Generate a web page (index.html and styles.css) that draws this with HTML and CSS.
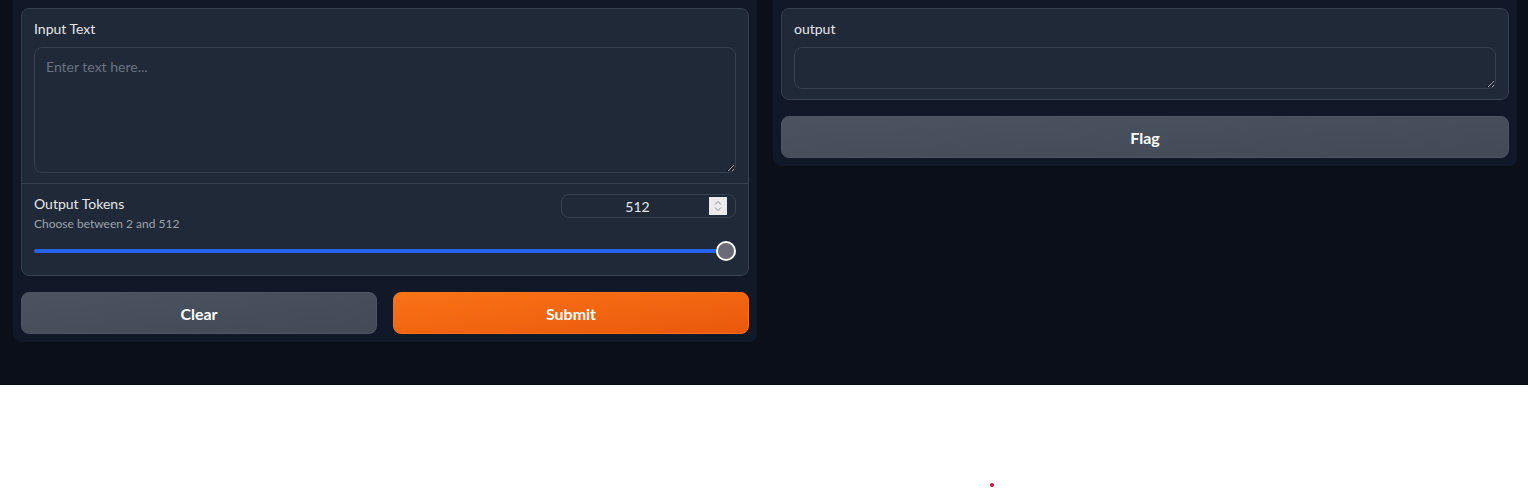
FILE: index.html
```html
<!DOCTYPE html>
<html>
<head>
<meta charset="utf-8">
<link rel="stylesheet" href="styles.css">
</head>
<body>
<div class="app">
  <div class="row">
    <div class="col">
      <div class="block">
        <div class="section">
          <label class="label">Input Text</label>
          <textarea class="textarea tall" placeholder="Enter text here..."></textarea>
        </div>
        <div class="section slider-sec">
          <div class="slider-head">
            <div class="titles">
              <div class="label-t">Output Tokens</div>
              <div class="hint">Choose between 2 and 512</div>
            </div>
            <div class="number">
              <span class="num-val">512</span>
              <span class="spin">
                <svg width="18" height="18" viewBox="0 0 18 18"><path d="M6 7.5 L9 4.5 L12 7.5" fill="none" stroke="#8a8a92" stroke-width="1"/><path d="M6 10.5 L9 13.5 L12 10.5" fill="none" stroke="#8a8a92" stroke-width="1"/></svg>
              </span>
            </div>
          </div>
          <div class="slider">
            <div class="track"></div>
            <div class="thumb"></div>
          </div>
        </div>
      </div>
      <div class="btn-row">
        <button class="btn secondary">Clear</button>
        <button class="btn primary">Submit</button>
      </div>
    </div>
    <div class="col">
      <div class="block">
        <div class="section">
          <label class="label">output</label>
          <textarea class="textarea short"></textarea>
        </div>
      </div>
      <button class="btn secondary">Flag</button>
    </div>
  </div>
</div>
<div class="below">
  <span class="dot"></span>
</div>
</body>
</html>
```

FILE: styles.css
```css
* { box-sizing: border-box; }
html, body { margin: 0; padding: 0; }
body {
  background: #ffffff;
  font-family: "Lato", "Liberation Sans", sans-serif;
  color: #e5e7eb;
}
.app {
  background: #0b0f19;
  height: 385px;
}
.row {
  display: flex;
  gap: 16px;
  padding: 0 11px 0 13px;
  align-items: flex-start;
}
.col {
  flex: 1;
  background: #111827;
  border-radius: 0 0 8px 8px;
  padding: 8px;
  display: flex;
  flex-direction: column;
  gap: 16px;
}
.block {
  background: #1f2937;
  border: 1px solid #374151;
  border-radius: 8px;
}
.section {
  padding: 10px 12px;
  display: flex;
  flex-direction: column;
}
.label {
  font-size: 14px;
  line-height: 20px;
  color: #e5e7eb;
  margin-bottom: 8px;
}
.textarea {
  display: block;
  width: 100%;
  background: #1f2937;
  border: 1px solid #374151;
  border-radius: 8px;
  color: #e5e7eb;
  font-family: inherit;
  font-size: 14px;
  padding: 10px 11px;
  resize: vertical;
  outline: none;
  color-scheme: dark;
}
.textarea::placeholder { color: #6b7280; }
.tall { height: 126px; }
.short { height: 42px; }
.slider-sec {
  border-top: 1px solid #374151;
  padding: 10px 12px 14px;
}
.slider-head {
  display: flex;
  justify-content: space-between;
  align-items: flex-start;
}
.label-t {
  font-size: 14px;
  line-height: 20px;
  color: #e5e7eb;
}
.hint {
  font-size: 12px;
  line-height: 16px;
  color: #9ca3af;
  margin-top: 2px;
}
.number {
  width: 175px;
  height: 24px;
  border: 1px solid #374151;
  border-radius: 8px;
  display: flex;
  align-items: center;
  padding: 0 8px 0 4px;
}
.num-val {
  flex: 1;
  text-align: center;
  font-size: 14px;
  color: #e5e7eb;
}
.spin {
  width: 18px;
  height: 18px;
  background: #ebebee;
  display: flex;
}
.slider {
  position: relative;
  height: 20px;
  margin-top: 9px;
}
.track {
  position: absolute;
  left: 0;
  right: 10px;
  top: 8px;
  height: 4px;
  border-radius: 2px;
  background: #2563eb;
}
.thumb {
  position: absolute;
  right: 0;
  top: 0;
  width: 20px;
  height: 20px;
  border-radius: 50%;
  background: #6b6b78;
  border: 2px solid #ffffff;
}
.btn-row {
  display: flex;
  gap: 16px;
}
.btn-row .btn { flex: 1; }
.btn {
  height: 42px;
  border-radius: 8px;
  font-family: inherit;
  font-size: 16px;
  font-weight: 700;
  color: #ffffff;
  cursor: pointer;
}
.secondary {
  background: linear-gradient(to bottom right, #4b5260, #434a57);
  border: 1px solid #4b5563;
}
.primary {
  background: linear-gradient(to bottom right, #f97316, #ea580c);
  border: 1px solid #f97316;
}
.below {
  height: 103px;
  position: relative;
}
.dot {
  position: absolute;
  left: 990px;
  top: 98px;
  width: 4px;
  height: 4px;
  border-radius: 50%;
  background: #d0102e;
}
```
